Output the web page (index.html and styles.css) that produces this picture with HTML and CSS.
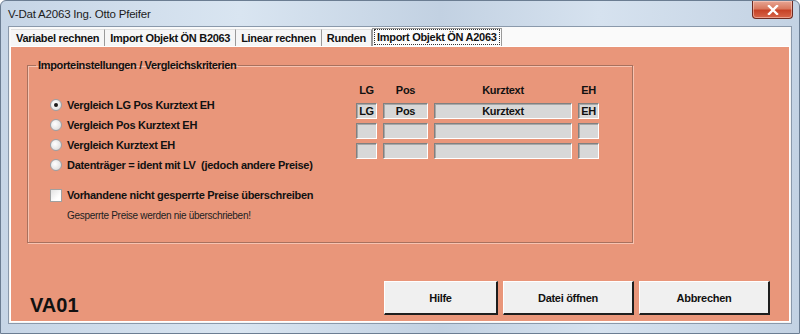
FILE: index.html
```html
<!DOCTYPE html>
<html lang="de">
<head>
    <meta charset="UTF-8">
    <title>V-Dat A2063 Ing. Otto Pfeifer</title>
    <link rel="stylesheet" href="styles.css">
</head>
<body>
    <div class="window">
        <div class="titlebar">
            <span class="title">V-Dat A2063 Ing. Otto Pfeifer</span>
            <button class="close" aria-label="Schließen">
                <svg width="12" height="10" viewBox="0 0 12 10">
                    <path d="M2 1 L10 9 M10 1 L2 9" stroke="#fff" stroke-width="2.4" stroke-linecap="square"/>
                </svg>
            </button>
        </div>
        <div class="client">
            <div class="tabs">
                <span class="tab">Variabel rechnen</span>
                <span class="tab">Import Objekt ÖN B2063</span>
                <span class="tab">Linear rechnen</span>
                <span class="tab">Runden</span>
                <span class="tab active"><span class="focus">Import Objekt ÖN A2063</span></span>
            </div>
            <div class="page">
                <fieldset class="group">
                    <legend>Importeinstellungen / Vergleichskriterien</legend>
                    <div class="group-body">
                        <div class="options">
                            <label class="option"><span class="radio checked"></span>Vergleich LG Pos Kurztext EH</label>
                            <label class="option"><span class="radio"></span>Vergleich Pos Kurztext EH</label>
                            <label class="option"><span class="radio"></span>Vergleich Kurztext EH</label>
                            <label class="option"><span class="radio"></span>Datenträger = ident mit LV&nbsp; (jedoch andere Preise)</label>
                            <label class="option check-row"><span class="checkbox"></span>Vorhandene nicht gesperrte Preise überschreiben</label>
                            <p class="note">Gesperrte Preise werden nie überschrieben!</p>
                        </div>
                        <div class="fields">
                            <span class="col-head">LG</span>
                            <span class="col-head">Pos</span>
                            <span class="col-head">Kurztext</span>
                            <span class="col-head">EH</span>

                            <span class="field">LG</span>
                            <span class="field">Pos</span>
                            <span class="field">Kurztext</span>
                            <span class="field">EH</span>

                            <span class="field"></span>
                            <span class="field"></span>
                            <span class="field"></span>
                            <span class="field"></span>

                            <span class="field"></span>
                            <span class="field"></span>
                            <span class="field"></span>
                            <span class="field"></span>
                        </div>
                    </div>
                </fieldset>
                <div class="footer">
                    <span class="code">VA01</span>
                    <div class="buttons">
                        <button class="btn btn-help">Hilfe</button>
                        <button class="btn">Datei öffnen</button>
                        <button class="btn">Abbrechen</button>
                    </div>
                </div>
            </div>
        </div>
    </div>
</body>
</html>
```

FILE: styles.css
```css
* {
    margin: 0;
    padding: 0;
    box-sizing: border-box;
}

body {
    width: 800px;
    height: 334px;
    overflow: hidden;
    background: #ffffff;
    font-family: "Liberation Sans", Arial, sans-serif;
}

.window {
    width: 800px;
    height: 334px;
    display: flex;
    flex-direction: column;
    border: 1px solid #6b7d92;
    border-radius: 6px 6px 0 0;
    background: linear-gradient(90deg, #c6d5e6 0%, #d9e5f1 30%, #c2d1e2 55%, #d6e2ef 75%, #c3d2e3 100%);
    padding: 0 7px 9px;
}

/* title bar */

.titlebar {
    height: 25px;
    display: flex;
    align-items: flex-start;
    justify-content: space-between;
}

.title {
    font-size: 11.5px;
    color: #1c1c1c;
    line-height: 14px;
    margin-top: 6px;
    letter-spacing: -0.2px;
}

.close {
    width: 41px;
    height: 18px;
    margin-right: -1px;
    border: 1px solid #6e2b22;
    border-top: none;
    border-radius: 0 0 4px 4px;
    background: linear-gradient(#e7a694 0%, #d9795f 45%, #c64227 55%, #d8664a 100%);
    display: flex;
    align-items: center;
    justify-content: center;
    box-shadow: inset 0 0 0 1px rgba(255, 220, 210, 0.5);
}

/* client area */

.client {
    flex: 1;
    display: flex;
    flex-direction: column;
    background: #f4f4f4;
    border: 1px solid #8a99ab;
    padding: 0 1px 1px;
}

.tabs {
    height: 19px;
    display: flex;
    align-items: flex-end;
    padding-left: 1px;
    background: #fafafa;
}

.tab {
    height: 17px;
    padding: 0 5px;
    font-size: 11px;
    font-weight: bold;
    letter-spacing: -0.3px;
    line-height: 16px;
    color: #111;
    border-right: 1px solid #9a9a9a;
    border-top: 1px solid #e0e0e0;
    background: #f6f6f6;
}

.tab.active {
    height: 18px;
    border: 1px solid #9a9a9a;
    border-bottom: none;
    background: #fcfcfc;
    padding: 0 1px;
}

.tab .focus {
    display: block;
    border: 1px dotted #333;
    line-height: 14px;
    padding: 0 2px;
}

/* tab page */

.page {
    flex: 1;
    display: flex;
    flex-direction: column;
    background: #e9967a;
    border: 1px solid #ffffff;
    padding: 0 19px 5px 16px;
}

.group {
    margin-top: 12px;
    width: 606px;
    height: 184px;
    border: 1px solid #a8715e;
    box-shadow: 1px 1px 0 #f7c3b1, inset 1px 1px 0 #f7c3b1;
}

.group legend {
    margin-left: 8px;
    padding: 0 2px;
    font-size: 11px;
    font-weight: bold;
    letter-spacing: -0.35px;
    line-height: 13px;
    color: #111;
}

.group-body {
    display: flex;
    align-items: flex-start;
    justify-content: space-between;
    padding: 0 33px 0 22px;
}

.options {
    display: flex;
    flex-direction: column;
    padding-top: 23px;
}

.option {
    height: 20px;
    display: flex;
    align-items: center;
    gap: 5px;
    font-size: 11px;
    font-weight: bold;
    letter-spacing: -0.3px;
    color: #111;
}

.radio {
    width: 12px;
    height: 12px;
    border-radius: 50%;
    border: 1px solid #9aa0a6;
    background: radial-gradient(circle at 40% 40%, #ffffff 0%, #e6e6e6 60%, #cfcfcf 100%);
    display: flex;
    align-items: center;
    justify-content: center;
}

.radio.checked::after {
    content: "";
    width: 4px;
    height: 4px;
    border-radius: 50%;
    background: #1a1a1a;
}

.check-row {
    margin-top: 10px;
}

.checkbox {
    width: 12px;
    height: 13px;
    border: 1px solid #a0a0a0;
    background: linear-gradient(135deg, #e2e2e2 0%, #ffffff 70%);
}

.note {
    margin-top: 4px;
    padding-left: 17px;
    font-size: 10px;
    line-height: 14px;
    letter-spacing: -0.3px;
    color: #222;
}

/* comparison fields */

.fields {
    display: grid;
    grid-template-columns: 21px 45px 138px 21px;
    grid-auto-rows: 16px;
    column-gap: 6px;
    row-gap: 4px;
    padding-top: 11px;
}

.col-head {
    font-size: 11px;
    font-weight: bold;
    letter-spacing: -0.3px;
    line-height: 14px;
    text-align: center;
    color: #111;
    margin-bottom: -2px;
}

.field {
    background: #d8d8d8;
    border-top: 1px solid #808080;
    border-left: 1px solid #808080;
    border-right: 1px solid #ffffff;
    border-bottom: 1px solid #ffffff;
    box-shadow: inset 1px 1px 0 #a8a8a8;
    font-size: 11px;
    font-weight: bold;
    letter-spacing: -0.3px;
    line-height: 14px;
    text-align: center;
    color: #111;
}

/* footer */

.footer {
    margin-top: auto;
    display: flex;
    align-items: flex-end;
    justify-content: space-between;
    padding-left: 3px;
}

.code {
    font-size: 20px;
    font-weight: bold;
    line-height: 20px;
    color: #111;
    margin-bottom: 1px;
}

.buttons {
    display: flex;
    gap: 5px;
    margin-bottom: 1px;
}

.btn {
    width: 131px;
    height: 34px;
    background: #f0f0f0;
    border-top: 1px solid #ffffff;
    border-left: 1px solid #ffffff;
    border-right: 2px solid #1e1e1e;
    border-bottom: 2px solid #1e1e1e;
    font-family: "Liberation Sans", Arial, sans-serif;
    font-size: 11px;
    font-weight: bold;
    letter-spacing: -0.3px;
    color: #111;
}

.btn-help {
    width: 114px;
}
```
